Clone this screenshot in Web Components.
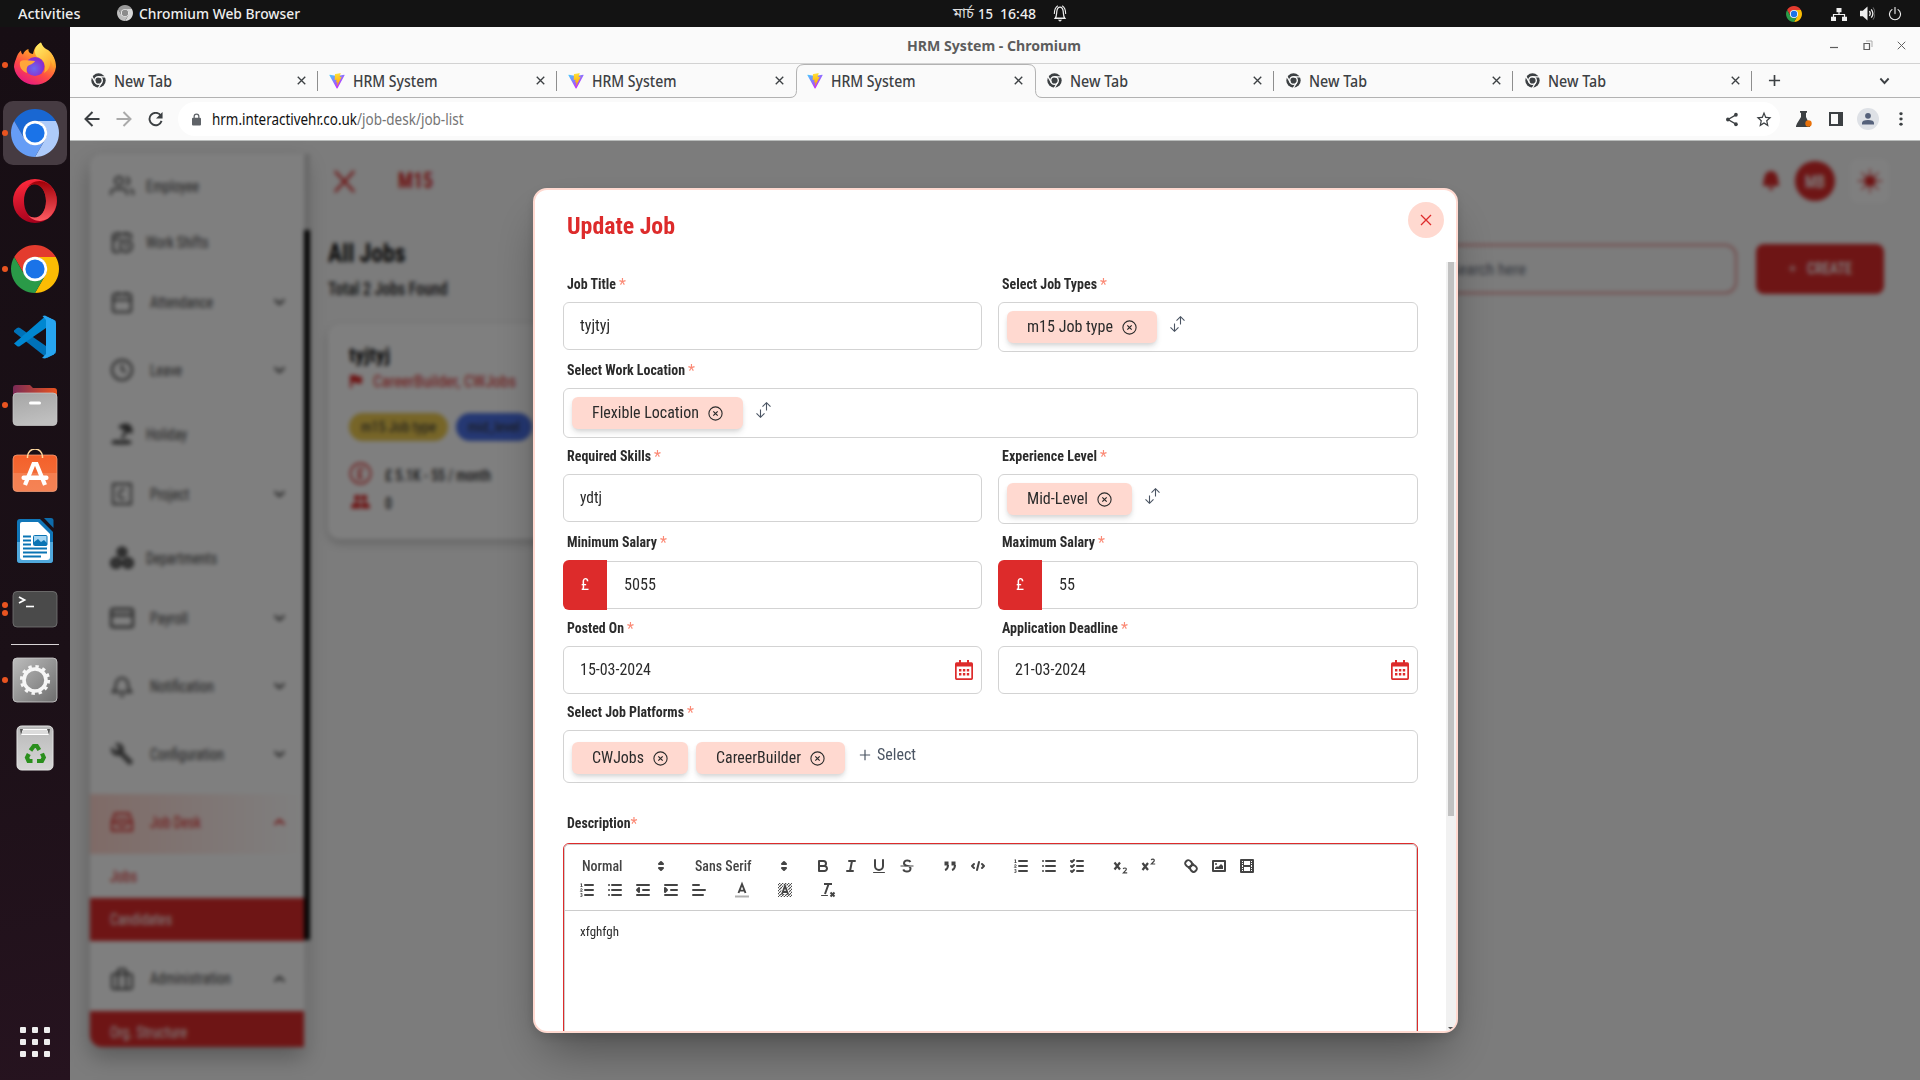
<!DOCTYPE html>
<html lang="en">
<head>
<meta charset="utf-8">
<title>HRM System - Chromium</title>
<style>
html,body{margin:0;width:1920px;height:1080px;overflow:hidden;background:#7c7c7c}
</style>
</head>
<body>
<desk-top></desk-top>
<script>
const fit = (w, s, cls = '') => `<fit-text w="${w}" class="${cls}">${s}</fit-text>`;
const ico = (n, w, h = w, cls = '') => `<ui-icon name="${n}" w="${w}" h="${h}" class="${cls}"></ui-icon>`;

function define(name, html, setup) {
  customElements.define(name, class extends HTMLElement {
    connectedCallback() {
      if (this.shadowRoot) return;
      const root = this.attachShadow({ mode: 'open' });
      const tpl = document.createElement('template');
      tpl.innerHTML = typeof html === 'function' ? html(this) : html;
      root.append(tpl.content.cloneNode(true));
      if (setup) setup(this, root);
    }
  });
}

/* Text set to an exact advance width, in px. */
customElements.define('fit-text', class extends HTMLElement {
  connectedCallback() {
    if (!this.shadowRoot) {
      this.attachShadow({ mode: 'open' }).innerHTML =
        '<style>:host{display:inline-block;white-space:pre;flex:none}span{display:inline-block;transform-origin:0 50%}</style><span><slot></slot></span>';
      this.style.width = this.getAttribute('w') + 'px';
      window.addEventListener('load', () => this.fit());
    }
    this.fit();
  }
  fit() {
    const s = this.shadowRoot.querySelector('span');
    s.style.transform = 'none';
    const n = s.getBoundingClientRect().width;
    if (n) s.style.transform = `scaleX(${(+this.getAttribute('w') / n).toFixed(4)})`;
  }
});

const chromeShape = (a, b, c, hole, dot) =>
  `<path fill="${a}" d="M24 12H44.78A24 24 0 0 0 3.22 12L13.61 30A12 12 0 0 1 24 12Z"/>
   <path fill="${b}" d="M34.39 30L24 48A24 24 0 0 0 44.78 12H24A12 12 0 0 1 34.39 30Z"/>
   <path fill="${c}" d="M13.61 30L3.22 12A24 24 0 0 0 24 48L34.39 30A12 12 0 0 1 13.61 30Z"/>
   <circle cx="24" cy="24" r="12.2" fill="${hole}"/><circle cx="24" cy="24" r="9.6" fill="${dot}"/>`;
const st = (d, w = 2, extra = '') => `<path fill="none" stroke="currentColor" stroke-width="${w}" ${extra} d="${d}"/>`;
const rc = 'stroke-linecap="round" stroke-linejoin="round"';

const ICONS = {
  chrome: ['0 0 48 48', chromeShape('#e33b2e', '#fbbc04', '#2a9a48', '#fff', '#1a73e8')],
  chromium: ['0 0 48 48', chromeShape('#1967d2', '#aecbfa', '#669df6', '#fff', '#1a73e8')],
  chromiumGray: ['0 0 48 48', chromeShape('#9a9a9a', '#d8d8d8', '#bdbdbd', '#f4f4f4', '#8b8b8b')],
  newtab: ['0 0 48 48', `<circle cx="24" cy="24" r="23" fill="#3c4043"/><circle cx="24" cy="24" r="12.2" fill="none" stroke="#fafafa" stroke-width="4.5"/><path stroke="#fafafa" stroke-width="4" d="M24 12H46M34.4 30L23 49M13.6 30L2.6 11"/>`],
  vite: ['0 0 410 404', `<defs><linearGradient id="a" x1="6" y1="33" x2="235" y2="344" gradientUnits="userSpaceOnUse"><stop stop-color="#41D1FF"/><stop offset="1" stop-color="#BD34FE"/></linearGradient><linearGradient id="b" x1="194" y1="9" x2="236" y2="293" gradientUnits="userSpaceOnUse"><stop stop-color="#FFEA83"/><stop offset=".08" stop-color="#FFDD35"/><stop offset="1" stop-color="#FFA800"/></linearGradient></defs><path fill="url(#a)" d="M399.641 59.5246L215.643 388.545C211.844 395.338 202.084 395.378 198.228 388.618L10.5817 59.5563C6.38087 52.1896 12.6802 43.2665 21.0281 44.7586L205.223 77.6824C206.398 77.8924 207.601 77.8904 208.776 77.6763L389.119 44.8058C397.439 43.2894 403.768 52.1434 399.641 59.5246Z"/><path fill="url(#b)" d="M292.965 1.5744L156.801 28.2552C154.563 28.6937 152.906 30.5903 152.771 32.8664L144.395 174.33C144.198 177.662 147.258 180.248 150.51 179.498L188.42 170.749C191.967 169.931 195.172 173.055 194.443 176.622L183.18 231.775C182.422 235.487 185.907 238.661 189.532 237.56L212.947 230.446C216.577 229.344 220.065 232.527 219.297 236.242L201.398 322.875C200.278 328.294 207.486 331.249 210.492 326.603L212.5 323.5L323.454 102.072C325.312 98.3645 322.108 94.137 318.036 94.9228L279.014 102.454C275.347 103.161 272.227 99.746 273.262 96.1583L298.731 7.86689C299.767 4.27314 296.636 0.855181 292.965 1.5744Z"/>`],
  bellTop: ['0 0 16 18', st('M2.500 14C4.300 12 4 9.500 4.300 7 4.700 3.800 6 2.300 8 2.300s3.300 1.500 3.700 4.700C12 9.500 11.700 12 13.500 14Z', 1.4) + '<path fill="currentColor" d="M5.500 15.500h5l-2.500 2.300z"/>' + st('M1.500 9.500C1.500 5.500 2.800 2.300 5.500.8M14.500 9.500c0-4-1.300-7.200-4-8.700', 1.2)],
  network: ['0 0 16 16', '<path fill="currentColor" d="M5.500 1h5v5h-5zM0 11h5v5H0zM11 11h5v5h-5z"/>' + st('M8 5v4M2.500 12V8.500h11V12', 1.2)],
  volume: ['0 0 16 16', '<path fill="currentColor" d="M0 5h3l5-4.500v15L3 11H0z"/>' + st('M10 5.500q1.800 2.500 0 5M12 3.500q3.500 4.500 0 9', 1.4) + '<path d="M14 1.500q4 6.500 0 13" fill="none" stroke="#777"/>'],
  power: ['0 0 16 16', st('M4.500 3A6.300 6.300 0 1 0 11.500 3M8 .5V7.500', 1.3, rc)],
  firefox: ['0 0 48 48', `<defs><linearGradient id="a" x1=".8" y1="0" x2=".25" y2="1"><stop stop-color="#ffe54a"/><stop offset=".35" stop-color="#ff9a2a"/><stop offset=".65" stop-color="#ff4a45"/><stop offset="1" stop-color="#e31587"/></linearGradient><radialGradient id="b" cx=".45" cy=".6"><stop stop-color="#6a6af0"/><stop offset="1" stop-color="#8a2fd0"/></radialGradient><linearGradient id="c" x1="0" x2=".6" y2="1"><stop stop-color="#fff36b"/><stop offset="1" stop-color="#ffa52a"/></linearGradient></defs><path fill="url(#a)" d="M5 18C6 14 8 11 10 9.500 10 12 11 13 12 13.500 13 10.500 15 9 17.500 8 17 11 19 12.500 22 13 23 8 25 4 30 1.500 31 7 34 9 37 11L36 8.500C42 13 45 19 45 26A21.200 20.500 0 0 1 3 26C3 23 4 20 5 18Z"/><path fill="url(#c)" d="M30 1.500C24 5 22 11 26 16 33 18 36 25 33 32 38 29 40 24 39 19 41 21 42 24 42 27 46 17 40 11 36 8.500 33 7 31 4 30 1.500Z"/><circle cx="24" cy="25.500" r="9.500" fill="url(#b)"/><path fill="#ffa63a" d="M9 21C12 18 17 20 24 20 23 23 18 23.500 16.500 25.500 15 28 16 31 16 32 11 30 8 26 9 21Z"/>`],
  opera: ['0 0 48 48', `<defs><linearGradient id="a" x1=".3" x2=".5" y2="1"><stop stop-color="#ff2a3c"/><stop offset="1" stop-color="#a4001c"/></linearGradient><linearGradient id="b" x2="0" y2="1"><stop stop-color="#a00008"/><stop offset="1" stop-color="#ff5b62"/></linearGradient></defs><path fill="url(#a)" d="M24 2A22 22 0 1 0 24 46 22 22 0 1 0 24 2ZM24 7C30 7 35 14 35 24S30 41 24 41 13 34 13 24 18 7 24 7Z" fill-rule="evenodd"/><path fill="url(#b)" d="M17 9.500C20 5.500 28 1 37 6.500A22 22 0 0 1 37 41.500C29 46.500 21 43 17 38.500 27 44.500 35 36 35 24S27 3.500 17 9.500Z"/>`],
  vscode: ['0 0 48 48', `<path fill="#0072b8" d="M3 17.500L6 15q1.500-1 3 0L45 40l-9 5L3 19Z"/><path fill="#0087d1" d="M3 30.500L34 3.500 45 8 9 33q-1.500 1-3 0Z"/><path fill="#27a5f0" d="M33 45C35 44 35 43 35 41V7C35 5 35 4 33 3L43 7q2 1 2 3V38q0 2-2 3Z"/><path fill="#27a5f0" d="M31 45l3 .5 9-4V7L34 2.500l-2.500.5L35 7V41Z"/>`],
  files: ['0 0 48 48', `<defs><linearGradient id="a"><stop stop-color="#7a2a56"/><stop offset="1" stop-color="#e95420"/></linearGradient><linearGradient id="b" x2=".3" y2="1"><stop stop-color="#a5a5a5"/><stop offset="1" stop-color="#bfbfbf"/></linearGradient></defs><path fill="url(#a)" d="M2 10V7q0-3 3-3H19l3 3H43q3 0 3 3v8H2Z"/><rect x="2" y="12" width="44" height="32.500" rx="4" fill="url(#b)" stroke="#ccc" stroke-width=".7"/><rect x="18" y="20.500" width="12" height="3" rx="1.500" fill="#fff"/>`],
  software: ['0 0 48 48', `<defs><linearGradient id="a" x2="0" y2="1"><stop stop-color="#f4602a"/><stop offset=".5" stop-color="#f36a35"/><stop offset=".5" stop-color="#f57f50"/><stop offset="1" stop-color="#f58355"/></linearGradient></defs><rect x="2" y="6" width="44" height="36.500" rx="4" fill="url(#a)" stroke="#f9a37c" stroke-width=".7"/><path d="M16.500 9V7.500a7.500 7.500 0 0 1 15 0V9" fill="none" stroke="#ffd9a0" stroke-width="1.500"/><path d="M14 36L22.500 15h3L34 36" fill="none" stroke="#fff" stroke-width="4.200"/><rect x="10.500" y="26.500" width="27" height="4.500" rx="2" fill="#fff"/>`],
  writer: ['0 0 48 48', `<path fill="#1076b8" d="M9 2H29L42 15V43q0 3-3 3H9q-3 0-3-3V5q0-3 3-3Z"/><path fill="#50a8dc" d="M6 25H42V43q0 3-3 3H9q-3 0-3-3Z"/><path fill="#fff" d="M11 5H27L39 17V40q0 3-3 3H12q-3 0-3-3V7q0-2 2-2Z"/><path fill="#0e6cab" d="M33 1h7q2.500 0 2.500 2.500V11Z"/><path stroke="#0a74b4" stroke-width="1.900" d="M12 19.500h8M12 23.500h8M12 27.500h8M12 31.500H36M12 35.500H36M12 39.500H30"/><rect x="22.500" y="18.500" width="13.500" height="10" rx="1" fill="#a4d5f2" stroke="#0a74b4" stroke-width="1"/><path fill="#0a74b4" d="M23 28v-3l4-3 3 3 3-2 3 3v2z"/>`],
  terminal: ['0 0 48 48', `<rect x="2" y="6.500" width="44" height="35.500" rx="4" fill="#4a4a4a" stroke="#777" stroke-width=".8"/><path d="M8 12l5.500 3L8 18" fill="none" stroke="#fff" stroke-width="1.800"/><path d="M15 21.500h8" stroke="#fff" stroke-width="1.600"/>`],
  settings: ['0 0 48 48', `<defs><linearGradient id="a" x2="1" y2="1"><stop stop-color="#bdbdbd"/><stop offset="1" stop-color="#6d6d6d"/></linearGradient></defs><rect x="2" y="2" width="44" height="44" rx="4" fill="url(#a)" stroke="#cfcfcf" stroke-width=".8"/><circle cx="24" cy="24" r="13.600" fill="none" stroke="#f6f6f6" stroke-width="3" stroke-dasharray="3.400 3.720"/><circle cx="24" cy="24" r="11" fill="none" stroke="#f6f6f6" stroke-width="3.600"/>`],
  trash: ['0 0 48 48', `<defs><linearGradient id="a" x2="0" y2="1"><stop stop-color="#b9b9b9"/><stop offset="1" stop-color="#d6d6d6"/></linearGradient></defs><rect x="6" y="2" width="36" height="44" rx="4.500" fill="url(#a)" stroke="#e4e4e4"/><path fill="#555" d="M9 5h30l-1 6H10z"/><path fill="#fff" d="M12 5h24l2 6H10z"/><path fill="none" stroke="#999" stroke-width=".7" d="M12 7h24M11 9h26"/><g fill="none" stroke="#2a8f1d" stroke-width="4.200"><path d="M19.500 26.500l3.300-4.500h3l2.500 4"/><path d="M31 29.500l1.800 4-1.800 3.500H26"/><path d="M21.500 37H17.500L16 33.500l1.800-3.500"/></g>`],
  grid: ['0 0 30 30', '<g fill="#eee">' + [0, 12, 24].map(y => [0, 12, 24].map(x => `<rect x="${x}" y="${y}" width="6" height="6" rx="1"/>`).join('')).join('') + '</g>'],
  x: ['0 0 12 12', st('M1 1L11 11M11 1L1 11', 1.8)],
  xthin: ['0 0 12 12', st('M1 1L11 11M11 1L1 11', 1.3)],
  min: ['0 0 10 10', st('M1 7.500H9', 1.200)],
  restore: ['0 0 10 10', st('M1 3.500H6.500V9.500H1Z', 1.200) + '<path fill="none" stroke="#aaa" d="M3 1H9V7"/>'],
  plus: ['0 0 14 14', st('M7 1V13M1 7H13', 1.800)],
  plusThin: ['0 0 14 14', st('M7 1V13M1 7H13', 1.400)],
  chev: ['0 0 12 8', st('M1.500 1.500L6 6L10.500 1.500', 2)],
  chevUp: ['0 0 12 8', st('M1.500 6.500L6 2L10.500 6.500', 2)],
  back: ['0 0 16 16', st('M15.500 8H2M8.500 1L1.500 8L8.500 15', 2)],
  fwd: ['0 0 16 16', st('M.5 8H14M7.500 1L14.500 8L7.500 15', 2)],
  reload: ['0 0 16 16', st('M13.500 3.500A6.600 6.600 0 1 0 14.500 9.500', 2) + '<path fill="currentColor" d="M15.500 0V7H8.500Z"/>'],
  lock: ['0 0 10 14', '<rect y="5" width="10" height="8.500" rx="1.200" fill="currentColor"/>' + st('M2.400 6V3.800a2.600 2.600 0 0 1 5.200 0V6', 1.400)],
  share: ['0 0 16 16', st('M12.500 3L3.500 8L12.500 13', 1.500) + '<g fill="currentColor"><circle cx="12.500" cy="3" r="2.100"/><circle cx="3.300" cy="8" r="2.100"/><circle cx="12.500" cy="13" r="2.100"/></g>'],
  star: ['0 0 24 24', '<path fill="currentColor" d="M22 9.240l-7.190-.62L12 2 9.190 8.630 2 9.240l5.460 4.730L5.820 21 12 17.270 18.180 21l-1.630-7.030L22 9.240zM12 15.400l-3.760 2.270 1-4.280-3.320-2.880 4.380-.38L12 6.100l1.710 4.040 4.380.38-3.320 2.880 1 4.280L12 15.400z"/>'],
  flask: ['0 0 16 16', '<path fill="currentColor" d="M4 0h7v1.800h-1V6l4 8.500V16H0v-1l1-2.500L5 6V1.800H4z"/><circle cx="12.500" cy="12.500" r="3.200" fill="#e8710a"/>'],
  panel: ['0 0 14 14', st('M1 1H13V13H1Z', 2) + '<path fill="currentColor" d="M9 1h4v12H9z"/>'],
  avatar: ['0 0 22 22', '<circle cx="11" cy="11" r="11" fill="#dee1e6"/><circle cx="11" cy="7.800" r="2.900" fill="#55617a"/><path fill="#55617a" d="M5 16.500V15q0-3 6-3t6 3v1.500z"/>'],
  dots: ['0 0 4 16', '<g fill="currentColor"><circle cx="2" cy="2" r="1.700"/><circle cx="2" cy="8" r="1.700"/><circle cx="2" cy="14" r="1.700"/></g>'],
  users: ['0 0 24 24', st('M17 21v-2a4 4 0 0 0-4-4H5a4 4 0 0 0-4 4v2M9 3a4 4 0 1 0 0 8 4 4 0 0 0 0-8M23 21v-2a4 4 0 0 0-3-3.870M16 3.130a4 4 0 0 1 0 7.750', 2)],
  calclock: ['0 0 24 24', st('M21 9V6a2 2 0 0 0-2-2H5a2 2 0 0 0-2 2v14a2 2 0 0 0 2 2h5M16 2v4M8 2v4M3 9h8', 2) + '<circle cx="16" cy="16" r="6" fill="none" stroke="currentColor" stroke-width="2"/>' + st('M16 13v3l2 1', 2)],
  cal: ['0 0 24 24', st('M5 4H19a2 2 0 0 1 2 2V20a2 2 0 0 1-2 2H5a2 2 0 0 1-2-2V6A2 2 0 0 1 5 4M16 2v4M8 2v4M3 10H21', 2)],
  clock: ['0 0 24 24', st('M12 2a10 10 0 1 0 0 20 10 10 0 0 0 0-20M12 6v6l4 2', 2)],
  beach: ['0 0 24 24', '<path fill="currentColor" d="M8 5Q13 0 19 2q5 4 3 10l-4-2q-3 3-5 7h-2q1-5 4-8zM1 21q1-3 5-3t5 1q2-1 5-1 5 0 6 3-3 2-6 1-3 1-5 0-2 1-4 0-3 1-6-1z"/>'],
  project: ['0 0 24 24', st('M3 2H21V22H3Z M15 8q-5-2-6 4t6 4', 1.800)],
  dept: ['0 0 24 24', '<g fill="currentColor"><circle cx="12" cy="6" r="5.500"/><circle cx="6" cy="17" r="6"/><circle cx="18" cy="17" r="6"/></g><g fill="#aaa"><circle cx="12" cy="6" r="1.600"/><circle cx="6" cy="17" r="1.900"/><circle cx="18" cy="17" r="1.900"/></g>'],
  card: ['0 0 24 24', st('M3 3H21a2 2 0 0 1 2 2V19a2 2 0 0 1-2 2H3a2 2 0 0 1-2-2V5A2 2 0 0 1 3 3M1 9H23', 2.400)],
  bell: ['0 0 24 24', st('M3 18c2-2 3-4 3-8a6 6 0 0 1 12 0c0 4 1 6 3 8ZM10 22h4', 2)],
  wrench: ['0 0 24 24', '<path fill="currentColor" d="M22.700 19L13.600 9.900C14.500 7.600 14 4.900 12.100 3 10.100 1 7.100.6 4.700 1.700L9 6 6 9 1.600 4.700C.4 7.100.9 10.100 2.900 12.100c1.900 1.900 4.600 2.400 6.900 1.500l9.100 9.100c.4.4 1 .4 1.400 0l2.300-2.300c.5-.4.5-1.100.1-1.400z" fill-opacity=".9"/>'],
  inbox: ['0 0 24 24', st('M22 12L19 3.500H5L2 12V20.500H22ZM2 12H7Q8 16 12 16T17 12H22M7 8l5 3 5-3', 2)],
  brief: ['0 0 24 24', st('M4 7H20a2 2 0 0 1 2 2V20a2 2 0 0 1-2 2H4a2 2 0 0 1-2-2V9A2 2 0 0 1 4 7M16 22V4a2 2 0 0 0-2-2H10a2 2 0 0 0-2 2V22', 2)],
  flag: ['0 0 14 14', '<path fill="currentColor" d="M1 1h6l1.500 1.500H13v7H8L6.500 8.500H3V14H1z"/>'],
  pound: ['0 0 24 24', st('M12 1.500a10.500 10.500 0 1 0 0 21 10.500 10.500 0 0 0 0-21M15 9q-1-3-3.500-2T10 11l1 2q0 3-2 4h6M9 12.500h5', 1.700)],
  people: ['0 0 20 16', '<g fill="currentColor"><circle cx="6.500" cy="4" r="3.300"/><circle cx="13.800" cy="4" r="3.300"/><path d="M0 15.500q0-7 6.500-7 2.500 0 3.500 1.500 0 0 0 5.500zM11 15.500V10q1-1.500 3-1.500 6 0 6 7z"/></g>'],
  bellFill: ['0 0 18 22', '<path fill="currentColor" d="M1 16C1 14 2 8 3 5q2-4 6-4t6 4c1 3 2 9 2 11zM6 17h6l-3 4z"/>'],
  sun: ['0 0 24 24', '<circle cx="12" cy="12" r="5.500" fill="currentColor"/>' + st('M12 0V24M0 12H24M3.500 3.500L20.500 20.500M20.500 3.500L3.500 20.500', 1.300)],
  chipx: ['0 0 15 15', '<circle cx="7.500" cy="7.500" r="6.600" fill="none" stroke="currentColor" stroke-width="1.100"/>' + st('M5.300 5.300L9.700 9.700M9.700 5.300L5.300 9.700', 1.200)],
  sort: ['0 0 15 16', st('M4.500 7.500V15.300M.5 11.300L4.500 15.300 8.500 11.300M10.500 8.500V.7M6.500 4.700L10.500.7 14.500 4.700', 1.100)],
  calRed: ['0 0 18 20', '<path fill="currentColor" fill-rule="evenodd" d="M4 0H6V2.200H12V0H14V2.200H16.500Q18 2.200 18 4V18.200Q18 20 16.500 20H1.500Q0 20 0 18.200V4Q0 2.200 1.500 2.200H4ZM1.700 6.500V18.300H16.300V6.500Z"/><path stroke="currentColor" stroke-width="2.400" stroke-dasharray="2.400 1.500" d="M4 10.200H14.200M4 14.200H14.200"/>'],
  pick: ['0 0 18 18', '<path fill="currentColor" stroke="currentColor" stroke-width="2" stroke-linejoin="round" d="M7 7L9 5 11 7ZM7 11L9 13 11 11Z"/>'],
  qb: ['0 0 18 18', st('M5 4H9.500A2.500 2.500 0 0 1 12 6.500 2.500 2.500 0 0 1 9.500 9H5ZM5 9H10.500A2.500 2.500 0 0 1 13 11.500 2.500 2.500 0 0 1 10.500 14H5Z', 2, rc)],
  qi: ['0 0 18 18', st('M7 4H13M5 14H11M8 14L10 4', 2, rc)],
  qu: ['0 0 18 18', st('M5 3V9A4 4 0 0 0 9 13 4 4 0 0 0 13 9V3', 2, rc) + '<rect x="3" y="15" width="12" height="1" rx=".5" fill="currentColor"/>'],
  qs: ['0 0 18 18', st('M2.500 9H15.500', 1) + '<path fill="currentColor" d="M6.455 8.727C5.500 8.100 5 7.300 5 6.200 5 4.100 6.700 2.500 9.300 2.500c2 0 3.500.8 4 2.100l-1.800.8c-.4-.7-1.100-1-2.200-1-1.400 0-2.300.7-2.300 1.700 0 .9.700 1.400 2 1.700l2 .6c.7.200 1.200.5 1.600.8h-6zM10.500 10h2.600c.3.500.4 1 .4 1.500 0 2.400-1.800 4-4.600 4-2.300 0-4-1-4.500-2.700l1.900-.7c.4 1 1.300 1.500 2.600 1.500 1.600 0 2.600-.7 2.600-1.900 0-.8-.4-1.300-1-1.700z"/>'],
  qquote: ['0 0 18 18', '<g fill="currentColor" stroke="currentColor"><rect x="4" y="5" width="3" height="3"/><rect x="11" y="5" width="3" height="3"/><path fill-rule="evenodd" d="M7 8c0 4.031-3 5-3 5M14 8c0 4.031-3 5-3 5" stroke-width="2" fill="none"/></g>'],
  qcode: ['0 0 18 18', st('M5 7L3 9 5 11M13 7L15 9 13 11M10 5L8 13', 2, rc)],
  qol: ['0 0 18 18', st('M7 4H15M7 9H15M7 14H15', 2, rc) + st('M2.500 5.500H4.500M3.500 5.500V2.700L2.500 3M2.300 8.200Q4.300 7 4.300 8.300L2.400 10.300H4.600M2.400 12.800Q4.500 12 4.200 13.300L3.300 14 4.400 14.700Q4.200 16 2.300 15.300', .9)],
  qul: ['0 0 18 18', st('M6 4H15M6 9H15M6 14H15M3 4H3.010M3 9H3.010M3 14H3.010', 2, rc)],
  qcheck: ['0 0 18 18', st('M9 4H15M9 9H15M9 14H15', 2, rc) + st('M3 4L4 5 6 3M3 14L4 15 6 13M3 9L4 10 6 8', 2, rc)],
  qsub: ['0 0 18 18', st('M3.500 5.500L9 12.500M9 5.500L3.500 12.500', 2.200) + st('M12.200 12Q12.500 11 14 11T15.200 12.800L12.400 15.800H16.200', 1.200)],
  qsup: ['0 0 18 18', st('M3.500 6L9 13M9 6L3.500 13', 2.200) + st('M12.200 3.200Q12.500 2.200 14 2.200T15.200 4L12.400 7H16.200', 1.200)],
  qlink: ['0 0 18 18', st('M7 11L11 7M8.900 4.577A3.476 3.476 0 0 1 8.536 7.500 3.476 3.476 0 0 1 3.644 3.644 3.473 3.473 0 0 1 8.900 4.577M13.423 9.100A3.476 3.476 0 0 0 10.500 9.464 3.476 3.476 0 0 0 14.356 14.356 3.473 3.473 0 0 0 13.423 9.100'.replace('M8.900 4.577A3.476 3.476 0 0 1 8.536 7.500 3.476 3.476 0 0 1 3.644 3.644 3.473 3.473 0 0 1 8.900 4.577M13.423 9.100A3.476 3.476 0 0 0 10.500 9.464 3.476 3.476 0 0 0 14.356 14.356 3.473 3.473 0 0 0 13.423 9.100', 'M8.900 4.577a3.476 3.476 0 0 1 .36 4.679A3.476 3.476 0 0 1 4.577 8.900C3.185 7.500 2.035 6.400 4.217 4.217S7.500 3.185 8.900 4.577ZM13.423 9.100a3.476 3.476 0 0 0-4.679-.36 3.476 3.476 0 0 0 .36 4.679c1.392 1.392 2.500 2.542 4.679.36S14.815 10.500 13.423 9.100Z'), 2, rc)],
  qimg: ['0 0 18 18', st('M3 4H15V14H3Z', 2, rc) + '<circle cx="6" cy="7" r="1" fill="currentColor"/><path fill="currentColor" d="M5 12V11L7 9 8 10 11 7 13 9V12Z"/>'],
  qvid: ['0 0 18 18', st('M3 3H15V15H3Z', 2, rc) + '<path fill="currentColor" d="M5 3h1v12H5zM12 3h1v12h-1zM5 8h8v2H5zM3 5h3v1H3zM3 7h3v1H3zM3 10h3v1H3zM3 12h3v1H3zM12 5h3v1h-3zM12 7h3v1h-3zM12 10h3v1h-3zM12 12h3v1h-3z"/>'],
  qout: ['0 0 18 18', st('M3 14H15M3 4H15M9 9H15M5 7V11L3 9Z', 2, rc)],
  qin: ['0 0 18 18', st('M3 14H15M3 4H15M9 9H15M3 7V11L5 9Z', 2, rc)],
  qalign: ['0 0 18 18', st('M3 9H15M3 14H13M3 4H9', 2, rc)],
  qcolor: ['0 0 18 18', '<path stroke="#b0b0b0" stroke-width="2" d="M2 15.500H16"/>' + st('M5.500 12L9 3 12.500 12M6.500 9.600H11.500', 1.900)],
  qbg: ['0 0 18 18', '<defs><pattern id="p" width="3" height="3" patternUnits="userSpaceOnUse"><path d="M0 3L3 0" stroke="#444" stroke-width="1.100"/></pattern></defs><rect x="2" y="2" width="14" height="14" fill="url(#p)"/><path fill="#fff" d="M7.500 4h3L14 13H4Z"/>' + st('M5.800 13.500L9 5 12.200 13.500M6.500 11H11.500', 1.900)],
  qclean: ['0 0 18 18', st('M5 3H13M6 13L9.600 3', 2) + st('M11.500 11.500L15.500 15.500M15.500 11.500L11.500 15.500', 2) + '<rect x="2" y="14" width="7" height="1" rx=".5" fill="currentColor"/>']
};

define('ui-icon', el => {
  const [vb, body] = ICONS[el.getAttribute('name')];
  const w = el.getAttribute('w'), h = el.getAttribute('h');
  return `<style>:host{display:inline-block;flex:none;width:${w}px;height:${h}px}svg{display:block}</style><svg width="${w}" height="${h}" viewBox="${vb}" preserveAspectRatio="none">${body}</svg>`;
});

/* ---------- Ubuntu shell ---------- */
define('desk-top', `<style>
:host{display:flex;flex-direction:column;width:1920px;height:1080px;overflow:hidden}
main{flex:1;display:flex;min-height:0}
browser-window{flex:1;min-width:0}
</style><top-bar></top-bar><main><app-dock></app-dock><browser-window></browser-window></main>`);

define('top-bar', `<style>
:host{display:grid;grid-template-columns:953px 1fr auto;height:27px;background:#131313;color:#eee;font:500 15px "Noto Sans","Open Sans",sans-serif;align-items:center;line-height:27px}
div{display:flex;align-items:center;height:27px}
.l{padding-left:18px}.app{margin:0 6px 0 36px}.time{margin:0 17px 0 7px}.r{padding-right:18px}
.b{font-family:"Noto Sans Bengali","Noto Sans",sans-serif;font-weight:400;font-size:14px;color:#ddd;margin:2px 4px 0 0}
.l,.l+div{padding-bottom:1px;height:26px}
</style>
<div class="l">${fit(62.5, 'Activities')}${ico('chromiumGray', 16, 16, 'app')}${fit(161, 'Chromium Web Browser')}</div>
<div>${fit(21, 'মার্চ', 'b')}${fit(15, '15')}${fit(36, '16:48', 'time')}${ico('bellTop', 14, 17)}</div>
<div class="r">${ico('chrome', 16)}<span style="width:29px"></span>${ico('network', 16, 14)}<span style="width:13px"></span>${ico('volume', 15, 15)}<span style="width:13px"></span>${ico('power', 14)}</div>`);

define('dock-item', el => {
  const n = +el.getAttribute('dots') || 0;
  return `<style>
:host{display:flex;height:68px;width:70px;align-items:center;flex:none}
.d{width:3px;padding-left:0;display:flex;flex-direction:column;gap:2px;align-items:center}
.d i{width:6px;height:6px;border-radius:3px;background:#e95420;margin-left:6px;z-index:1;flex:none}
.box{width:64px;height:64px;border-radius:10px;display:flex;align-items:center;justify-content:center}
:host([active]) .box{background:#463b42}
</style><div class="d">${'<i></i>'.repeat(n)}</div><div class="box">${ico(el.getAttribute('icon'), 48)}</div>`;
});

define('app-dock', `<style>
:host{display:flex;flex-direction:column;width:70px;height:1053px;background:linear-gradient(170deg,#170e14 0%,#1b1017 60%,#26131f 100%)}
.top{height:4px}.sep{width:48px;height:1px;background:#d8d4d6;margin:0 0 1px 11px}.sp{flex:1}
.apps{margin:0 0 23px 20px}
</style><div class="top"></div>
<dock-item icon="firefox" dots="1"></dock-item><dock-item icon="chromium" dots="1" active></dock-item><dock-item icon="opera"></dock-item>
<dock-item icon="chrome" dots="1"></dock-item><dock-item icon="vscode"></dock-item><dock-item icon="files" dots="1"></dock-item>
<dock-item icon="software"></dock-item><dock-item icon="writer"></dock-item><dock-item icon="terminal" dots="2"></dock-item>
<div style="height:1px"></div><div class="sep"></div><dock-item icon="settings" dots="1"></dock-item><dock-item icon="trash"></dock-item>
<div class="sp"></div>${ico('grid', 30, 30, 'apps')}`);

/* ---------- Browser chrome ---------- */
define('browser-tab', el => {
  const on = el.hasAttribute('active'), vite = el.getAttribute('icon') === 'vite';
  return `<style>
:host{display:flex;position:relative;box-sizing:border-box;width:239px;height:34px;align-items:center;flex:none;padding-left:${vite ? 11 : 12}px;color:#3c4043;border-bottom:1px solid #b2b2b2;font:500 15.500px "Noto Sans",sans-serif}
:host([active]){z-index:1;border-bottom-color:transparent}
.bg{position:absolute;left:-6px;top:0}
.lab{margin-left:8px;flex:1;position:relative}
ui-icon{position:relative}
.sep{width:1px;height:20px;background:#8e8e8e;margin-left:11px}
</style>
${on ? '<svg class="bg" width="252" height="35"><path d="M0 33.500Q6.500 33.500 6.500 26.500V8Q6.500.5 14 .5H238Q245.500.5 245.500 8V26.500Q245.500 33.500 252 33.500V35H0Z" fill="#fafafa"/><path d="M0 33.500Q6.500 33.500 6.500 26.500V8Q6.500.5 14 .5H238Q245.500.5 245.500 8V26.500Q245.500 33.500 252 33.500" fill="none" stroke="#b2b2b2"/></svg>' : ''}
${ico(el.getAttribute('icon'), vite ? 16 : 15)}<span class="lab"><slot></slot></span>${ico('x', 9)}
<span class="sep" style="${el.hasAttribute('nosep') ? 'visibility:hidden' : ''}"></span>`;
});

const newTab = attrs => `<browser-tab icon="newtab" ${attrs}>${fit(58, 'New Tab')}</browser-tab>`;
const hrTab = attrs => `<browser-tab icon="vite" ${attrs}>${fit(84.5, 'HRM System')}</browser-tab>`;
define('browser-window', `<style>
:host{display:flex;flex-direction:column;background:#fafafa;font-family:"Noto Sans",sans-serif}
.title{height:36px;display:flex;align-items:center;justify-content:flex-end;border-bottom:1px solid #d2d2d2;color:#5d5d5d;font-weight:700;font-size:15px}
.title .n{margin-right:748px}.title ui-icon{margin-right:24px}.title ui-icon:last-child{margin-right:14px}
.tabs{display:flex;height:34px;align-items:stretch;color:#3c4043}
.lead{width:9px;border-bottom:1px solid #b2b2b2;height:33px}
.rest{flex:1;display:flex;align-items:center;border-bottom:1px solid #b2b2b2;height:33px;padding:0 30px 0 16px;justify-content:space-between}
.bar{height:42px;display:flex;align-items:center;border-bottom:1px solid #b9bcbb;box-sizing:content-box;color:#3c4043}
.bar>ui-icon{margin-right:16px}
.omni{width:1602px;height:34px;border-radius:17px;background:#fff;display:flex;align-items:center;box-sizing:border-box;padding:0 7px 0 14px;margin:0 16px 0 -2px;font-size:15.500px;color:#757575}
.omni fit-text{margin-top:-1px}
.omni .host{color:#111;margin-left:11px}.omni .path{flex:none;margin-right:auto}.omni ui-icon{color:#3c4043}
hr-page{flex:1}
</style>
<div class="title">${fit(174, 'HRM System - Chromium', 'n')}${ico('min', 10)}${ico('restore', 10)}${ico('xthin', 9, 9)}</div>
<div class="tabs"><span class="lead"></span>${newTab('')}${hrTab('')}${hrTab('nosep')}${hrTab('active nosep')}${newTab('')}${newTab('')}${newTab('')}
<div class="rest">${ico('plus', 13)}${ico('chev', 11, 8)}</div></div>
<div class="bar"><span style="width:14px"></span>${ico('back', 16)}<ui-icon name="fwd" w="16" h="16" style="color:#aaa"></ui-icon>${ico('reload', 15)}<div style="width:1px"></div>
<div class="omni"><ui-icon name="lock" w="9" h="13" style="color:#5f6368"></ui-icon>${fit(145, 'hrm.interactivehr.co.uk', 'host')}${fit(106.500, '/job-desk/job-list', 'path')}${ico('share', 14, 15)}<span style="width:16px"></span>${ico('star', 18, 19)}</div>
<ui-icon name="flask" w="16" h="16" style="margin-right:17px"></ui-icon>${ico('panel', 14)}<ui-icon name="avatar" w="22" h="22" style="margin-left:-2px;margin-right:20px"></ui-icon>${ico('dots', 4, 14)}</div>
<hr-page></hr-page>`);

/* ---------- HR application ---------- */
define('side-item', el => {
  const g = k => el.getAttribute(k);
  return `<style>
:host{display:flex;box-sizing:border-box;align-items:center;height:${g('h')}px;padding:${g('pt') || 0}px 18px ${g('pb') || 0}px 20px;color:#484848;flex:none}
:host([hot]){color:#dd2b2b}
:host([band]){background:linear-gradient(90deg,#ffd6ce,#fff)}
:host([solid]){background:#dd2b2b;color:#fff}
.t{margin-left:${g('ml') || 0}px;flex:1}
</style>${g('icon') ? ico(g('icon'), 24) : ''}<span class="t"><slot></slot></span>${g('chev') ? ico(g('chev'), 13, 8) : ''}`;
});

const si = (icon, h, w, label, chev, ml, extra = '') => `<side-item ${icon ? `icon="${icon}"` : ''} h="${h}" ml="${ml}" ${chev ? `chev="${chev}"` : ''} ${extra}>${fit(w, label)}</side-item>`;
define('side-nav', `<style>
:host{display:flex;width:220px;height:893px;font-size:16px;font-weight:400}
nav{width:216px;display:flex;flex-direction:column;padding-top:2px;box-sizing:border-box;background:#fff;border-radius:12px 0 0 12px;overflow:hidden;height:893px;box-shadow:0 10px 22px rgba(0,0,0,.28)}
.track{width:5.500px;height:893px;background:linear-gradient(#d4d4d4,#e6e6e6);flex:none}.thumb{margin-top:76px;height:710px;background:#060606}
.g{height:14px;flex:none}
</style><nav>
${si('users', 60, 53, 'Employee', '', 12.5)}${si('calclock', 52, 62.5, 'Work Shifts', '', 12.5)}${si('cal', 68, 63, 'Attendance', 'chev', 16)}
${si('clock', 68, 32, 'Leave', 'chev', 16)}${si('beach', 60, 41, 'Holiday', '', 12)}${si('project', 60, 39, 'Project', 'chev', 16)}
${si('dept', 68, 71, 'Departments', '', 12)}${si('card', 52, 38, 'Payroll', 'chev', 16)}${si('bell', 84, 64, 'Notification', 'chev', 16)}
${si('wrench', 52, 74, 'Configuration', 'chev', 16)}<div class="g"></div>${si('inbox', 60, 51, 'Job Desk', 'chevUp', 16, 'hot band pb="4"')}
${si('', 44, 27, 'Jobs', '', 0, 'hot')}${si('', 43, 62, 'Candidates', '', 0, 'solid')}${si('brief', 70, 81, 'Administration', 'chevUp', 16, 'pt="5"')}
${si('', 36, 77, 'Org. Structure', '', 0, 'solid pt="7"')}
</nav><div class="track"><div class="thumb"></div></div>`);

define('hr-page', `<style>
:host{display:block;position:relative;height:939px;background:#f8f8f8;overflow:hidden;font-family:Roboto,sans-serif;font-stretch:75%;color:#222}
.app{display:flex;height:939px;padding:13px 0 0 19.500px;box-sizing:border-box}
main{flex:1;display:flex;flex-direction:column;padding-left:18.500px}
.head{display:flex;align-items:center;height:66px;padding:0 31px 0 5px;color:#dd2b2b;margin-top:-6px}
.m15{font-size:22px;font-weight:700;margin-left:42px;margin-right:auto;margin-top:-1px}
.ava{width:40px;height:40px;border-radius:20px;background:#dd2b2b;color:#fff;display:flex;align-items:center;justify-content:center;margin:0 15px 0 15px;font-weight:500;font-size:18px}
.sun{width:39px;height:44px;border-radius:8px;background:#fff;display:flex;align-items:center;justify-content:center}
.tools{display:flex;justify-content:space-between;padding:21px 36px 0 0;height:88px;box-sizing:content-box}
h1{margin:2.500px 0 0;font-size:25px;line-height:32px;font-weight:700;color:#111}
h2{margin:5px 0 0;font-size:18px;line-height:28px;font-weight:500}
.act{display:flex;gap:19px;margin-top:9px}
.search{box-sizing:border-box;width:304px;height:50px;border:2px solid #e59191;border-radius:12px;padding-left:15px;line-height:46px;font-size:17px;color:#6b7280}
.create{box-sizing:border-box;width:128px;height:50px;border-radius:8px;background:#dd2b2b;color:#fff;display:flex;align-items:center;justify-content:center;gap:10px;font-size:16px;font-weight:500;padding-bottom:1px}
.card{box-sizing:border-box;width:400px;height:215px;background:#fff;border-radius:12px;box-shadow:0 4px 10px rgba(0,0,0,.2);padding:16px 21px;display:flex;flex-direction:column;margin-top:1px}
.card>div{display:flex;align-items:center}
.jt{font-size:20px;font-weight:700;height:30px;color:#111}.co{height:22px;gap:10px;color:#dd2b2b;font-size:16.500px}
.pills{gap:8px;margin-top:21px;height:28px}.pill{height:28px;border-radius:14px;padding:0 12px;display:flex;align-items:center;font-size:15.500px;color:#333}
.sal{margin-top:20px;height:28px;gap:12.500px;font-size:16px;font-weight:500;color:#333}
.red{color:#dd2b2b}
.veil{position:absolute;inset:0;background:rgba(0,0,0,.5);backdrop-filter:blur(2px);display:flex;align-items:center;justify-content:center;padding-left:1px}
</style>
<div class="app"><side-nav></side-nav><main>
<div class="head">${ico('xthin', 23, 25)}${fit(35, 'M15', 'm15')}${ico('bellFill', 18, 22)}<div class="ava">${fit(20, 'MB')}</div><div class="sun">${ico('sun', 24)}</div></div>
<div class="tools"><div><h1>${fit(77.500, 'All Jobs')}</h1><h2>${fit(119.500, 'Total 2 Jobs Found')}</h2></div>
<div class="act"><div class="search">${fit(76, 'Search here')}</div><div class="create">${ico('plus', 9)}${fit(45, 'CREATE')}</div></div></div>
<div class="card"><div class="jt">${fit(41, 'tyjtyj')}</div>
<div class="co">${ico('flag', 14)}${fit(143, 'CareerBuilder, CWJobs')}</div>
<div class="pills"><span class="pill" style="background:#eecb50">${fit(75, 'm15 Job type')}</span><span class="pill" style="background:#4a70e6">${fit(52, 'mid_level')}</span></div>
<div class="sal"><span class="red">${ico('pound', 23)}</span>${fit(106, '£ 5.1K - 55 / month')}</div>
<div class="sal" style="margin-top:0"><span class="red" style="padding:0 2px">${ico('people', 19, 15)}</span>${fit(7, '0')}</div></div>
</main></div>
<div class="veil"><job-modal></job-modal></div>`);

/* ---------- Modal and its form ---------- */
define('form-field', el => `<style>
:host{display:block}
label{display:flex;height:36px;align-items:center;padding-left:3.500px;font-size:14.500px;font-weight:700;color:#2b2b2b}
i{font-style:normal;font-weight:400;color:#fb8a76;margin-left:${el.getAttribute('gap') || 3.5}px;font-size:16px}
</style><label>${fit(el.getAttribute('w'), el.getAttribute('label'))}<i>*</i></label><slot></slot>`);

define('text-box', el => `<style>
:host{display:flex;align-items:center;box-sizing:border-box;height:48px;border:1px solid #d3d3d3;border-radius:6px;background:#fff;padding:0 8px 1.500px 15.500px;font-size:16px;color:#2b2b2b}
.v{flex:1}ui-icon{color:#dd2b2b;margin-top:2px}
</style><span class="v"><slot></slot></span>${el.hasAttribute('date') ? ico('calRed', 18, 20) : ''}`);

define('money-box', `<style>
:host{display:flex;height:50px;align-items:center}
b{box-sizing:border-box;width:44px;height:50px;background:#dd2b2b;color:#fff;border-radius:6px 0 0 6px;display:flex;align-items:center;justify-content:center;font-weight:400;font-size:16px;padding:0 1px 1px 0}
text-box{flex:1;border-radius:0 6px 6px 0;border-left:0;padding-left:16.500px}
</style><b>${fit(8, '£')}</b><text-box><slot></slot></text-box>`);

define('chip-tag', `<style>
:host{display:flex;box-sizing:border-box;align-items:center;gap:9.500px;height:32px;padding:0 20px 1px 19.500px;border-radius:6px;background:#ffd9d0;box-shadow:0 4px 6px -1px rgba(0,0,0,.13),0 2px 4px -1px rgba(0,0,0,.08);font-size:16px;color:#2b2b2b}
ui-icon{margin-top:1px}
</style><slot></slot>${ico('chipx', 15)}`);

define('chip-box', el => `<style>
:host{display:flex;box-sizing:border-box;height:${el.getAttribute('h') || 50}px;border:1px solid #d3d3d3;border-radius:6px;background:#fff;padding:${el.getAttribute('pt') || 8}px 8px 0;gap:8px;align-items:flex-start;color:#4b5563}
.s{margin:5px 0 0 5px}
</style><slot></slot>${el.hasAttribute('plain') ? '' : ico('sort', 15, 16, 's')}`);

const tools = a => `<span class="grp">${a.map(n => `<button>${ico(n, 18)}</button>`).join('')}</span>`;
define('rich-editor', `<style>
:host{display:block;box-sizing:border-box;height:300px;border:1px solid #dd2b2b;border-radius:6px;color:#444}
.in{border:1px solid #ccc;border-radius:5px 5px 0 0;height:296px}
.tb{padding:9px 8px 8px;display:flex;flex-wrap:wrap;row-gap:0;border-bottom:1px solid #ccc;height:48px;align-content:flex-start}
.grp{display:flex;margin-right:15px;height:24px}
button{width:28px;height:24px;border:0;background:none;padding:3px 5px;color:inherit;display:block}
.pk{display:flex;align-items:center;justify-content:space-between;padding:0 1px 0 8.500px;box-sizing:border-box;height:24px;margin-right:15px;font-size:14.500px;font-weight:500}
.brk{flex-basis:100%;height:0}
.ed{padding:12px 14.500px;font-size:13px;line-height:18px;color:#2b2b2b}
</style><div class="in"><div class="tb">
<span class="pk" style="width:98px">${fit(40.500, 'Normal')}${ico('pick', 18)}</span><span class="pk" style="width:108px">${fit(56.500, 'Sans Serif')}${ico('pick', 18)}</span>
${tools(['qb', 'qi', 'qu', 'qs'])}${tools(['qquote', 'qcode'])}${tools(['qol', 'qul', 'qcheck'])}${tools(['qsub', 'qsup'])}${tools(['qlink', 'qimg', 'qvid'])}<span class="brk"></span>
${tools(['qol', 'qul', 'qout', 'qin', 'qalign'])}${tools(['qcolor'])}${tools(['qbg'])}${tools(['qclean'])}
</div><div class="ed">${fit(39, 'xfghfgh')}</div></div>`);

const chip = (w, s) => `<chip-tag>${fit(w, s)}</chip-tag>`;
define('job-modal', `<style>
:host{display:flex;flex-direction:column;box-sizing:border-box;width:925px;height:845px;border:2px solid #ffd9d0;border-radius:14px;background:#fff;overflow:hidden;box-shadow:0 25px 50px -12px rgba(0,0,0,.4),0 4px 12px rgba(0,0,0,.12);color:#2b2b2b}
header{height:72px;flex:none;display:flex;align-items:center;justify-content:space-between;padding:0 12px 0 31.500px;color:#dd2b2b;font-size:24px;font-weight:700}
.close{width:36px;height:36px;border-radius:18px;background:#ffd9d0;display:flex;align-items:center;justify-content:center;margin-top:-12px}
.body{flex:1;display:flex;min-height:0}
.form{width:855px;padding:4px 28px 0;overflow:hidden}
.grid{display:grid;grid-template-columns:419px 420px;column-gap:16px}
.grid>*{height:86px}.w{grid-column:1/3}
.last{height:84px!important}.plat{height:89px!important}
.desc{margin-top:22px}.desc rich-editor{margin-top:2px}
.sc{width:10px;background:#f1f1f1;display:flex;flex-direction:column;align-items:center;justify-content:space-between}
.sc i{width:6px;height:554px;background:#c1c1c1}
.sc b{border:3px solid transparent;border-top:3px solid #555;border-bottom:0;margin-bottom:1px}
.sel{display:flex;align-items:center;gap:6px;margin:3px 0 0 6px;font-size:16px;color:#4b5563}
</style>
<header>${fit(108, 'Update Job')}<div class="close">${ico('xthin', 12, 12)}</div></header>
<div class="body"><div class="form"><div class="grid">
<form-field label="Job Title" w="49"><text-box>${fit(30, 'tyjtyj')}</text-box></form-field>
<form-field label="Select Job Types" w="95"><chip-box>${chip(86, 'm15 Job type')}</chip-box></form-field>
<form-field class="w" label="Select Work Location" w="118"><chip-box>${chip(107, 'Flexible Location')}</chip-box></form-field>
<form-field label="Required Skills" w="84"><text-box>${fit(22, 'ydtj')}</text-box></form-field>
<form-field label="Experience Level" w="95"><chip-box>${chip(61, 'Mid-Level')}</chip-box></form-field>
<form-field label="Minimum Salary" w="90"><money-box>${fit(32, '5055')}</money-box></form-field>
<form-field label="Maximum Salary" w="93"><money-box>${fit(16, '55')}</money-box></form-field>
<form-field class="last" label="Posted On" w="57"><text-box date>${fit(71, '15-03-2024')}</text-box></form-field>
<form-field class="last" label="Application Deadline" w="116"><text-box date>${fit(71, '21-03-2024')}</text-box></form-field>
<form-field class="w plat" label="Select Job Platforms" w="117"><chip-box plain h="53" pt="11">${chip(52, 'CWJobs')}${chip(85, 'CareerBuilder')}<span class="sel">${ico('plusThin', 12)}${fit(39, 'Select')}</span></chip-box></form-field>
</div><form-field class="desc" gap="0.5" label="Description" w="63.500"><rich-editor></rich-editor></form-field></div>
<div class="sc"><i></i><b></b></div></div>`);
</script>
</body>
</html>
